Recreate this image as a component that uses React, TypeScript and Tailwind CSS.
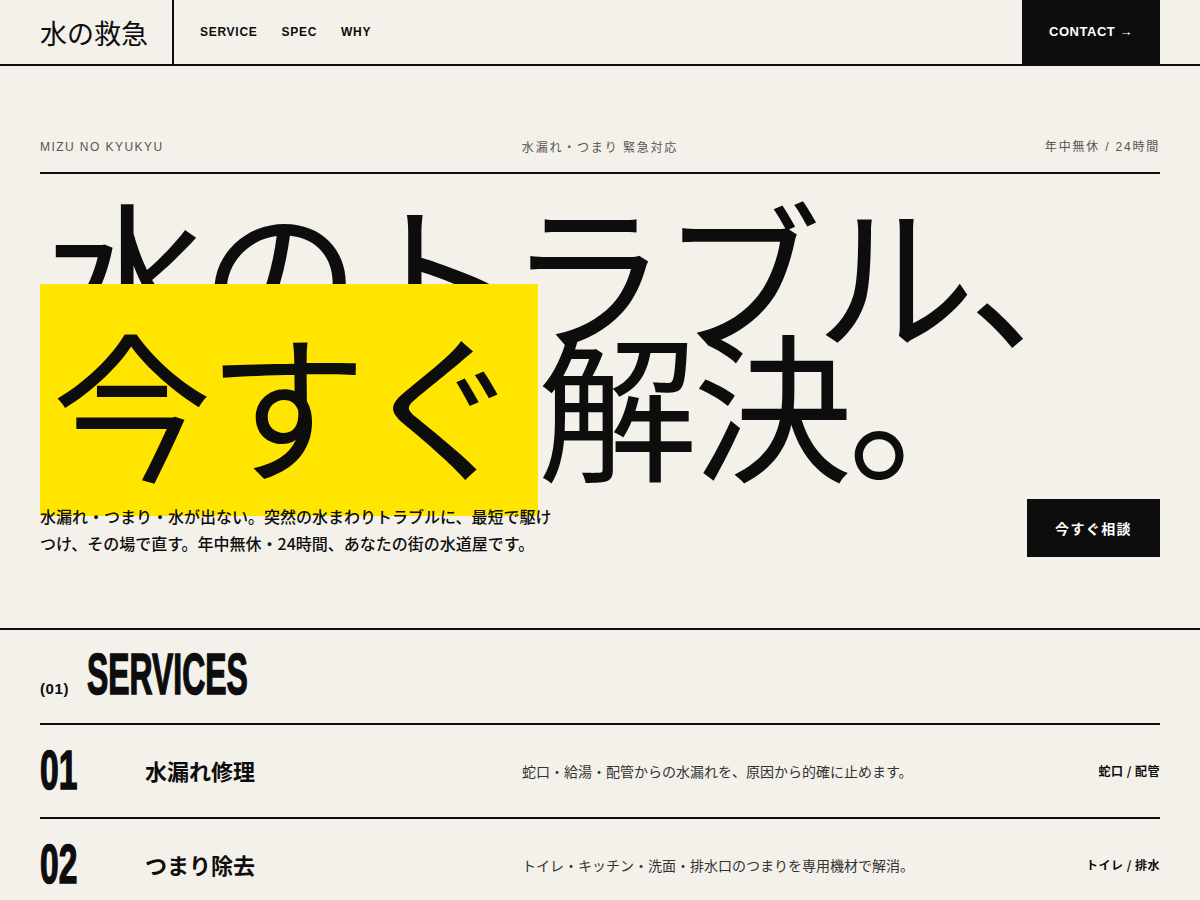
import React from "react";

const sans = { fontFamily: '"Liberation Sans", "Noto Sans CJK JP", sans-serif' };

const services = [
  { no: "01", title: "水漏れ修理", desc: "蛇口・給湯・配管からの水漏れを、原因から的確に止めます。", tag: "蛇口 / 配管" },
  { no: "02", title: "つまり除去", desc: "トイレ・キッチン・洗面・排水口のつまりを専用機材で解消。", tag: "トイレ / 排水" },
];

export default function App() {
  return (
    <div className="min-h-[900px] bg-[#f3f1ea] text-[#0d0d0d] overflow-hidden" style={sans}>
      <header className="flex h-[66px] items-stretch border-b-2 border-[#0d0d0d] px-10">
        <div className="flex w-[134px] items-center border-r-2 border-[#0d0d0d] font-['Noto_Sans_CJK_JP',sans-serif] text-[27px] leading-none">
          水の救急
        </div>
        <nav className="flex items-center gap-6 pl-[26px] text-[12px] font-bold tracking-[0.06em]">
          <span>SERVICE</span>
          <span>SPEC</span>
          <span>WHY</span>
        </nav>
        <div className="ml-auto flex w-[138px] items-center justify-center bg-[#0d0d0d] text-[13px] font-bold tracking-[0.04em] text-white">
          CONTACT →
        </div>
      </header>

      <section className="px-10">
        <div className="mt-[73px] grid grid-cols-3 border-b-2 border-[#0d0d0d] pb-[17px] text-[12px] leading-4 text-[#555]">
          <span className="font-medium tracking-[0.12em]">MIZU NO KYUKYU</span>
          <span className="text-center font-['Noto_Sans_CJK_JP',sans-serif] tracking-[0.15em]">水漏れ・つまり 緊急対応</span>
          <span className="text-right tracking-[0.15em]">年中無休 / 24時間</span>
        </div>

        <h1 className="mt-[30px] font-['Noto_Sans_CJK_JP',sans-serif] text-[160px] font-normal leading-[0.82] tracking-[-0.03em] whitespace-nowrap">
          <span className="pl-[7px] tracking-[-0.04em]">水のトラブル、</span>
          <br />
          <span className="bg-[#ffe500] pl-[12px] pr-[20px]">今すぐ</span>解決。
        </h1>

        <div className="relative mt-[33px] flex items-end justify-between">
          <p className="max-w-[520px] font-['Noto_Sans_CJK_JP',sans-serif] text-[16px] font-medium leading-[27px]">
            水漏れ・つまり・水が出ない。突然の水まわりトラブルに、最短で駆けつけ、その場で直す。年中無休・24時間、あなたの街の水道屋です。
          </p>
          <div className="flex h-[58px] w-[133px] items-center justify-center bg-[#0d0d0d] font-['Noto_Sans_CJK_JP',sans-serif] text-[14px] font-bold tracking-[0.1em] text-white">
            今すぐ相談
          </div>
        </div>
      </section>

      <section className="mt-[71px] border-t-2 border-[#0d0d0d] px-10">
        <div className="flex items-baseline gap-[18px] border-b-2 border-[#0d0d0d] pt-[15px] pb-[20px]">
          <span className="text-[15px] font-semibold tracking-[0.04em]">(01)</span>
          <span className="inline-block origin-left scale-x-[0.55] text-[58px] font-bold leading-none [-webkit-text-stroke:1.6px_#0d0d0d]">
            SERVICES
          </span>
        </div>
        {services.map((s) => (
          <div key={s.no} className="flex h-[94px] items-center border-b-2 border-[#0d0d0d]">
            <div className="w-[105px] pb-[3px]">
              <span className="inline-block origin-left scale-x-[0.6] text-[56px] font-bold leading-none [-webkit-text-stroke:1.6px_#0d0d0d]">
                {s.no}
              </span>
            </div>
            <span className="w-[377px] pb-[2px] font-['Noto_Sans_CJK_JP',sans-serif] text-[22px] font-bold">{s.title}</span>
            <span className="flex-1 font-['Noto_Sans_CJK_JP',sans-serif] text-[14px] text-[#333]">{s.desc}</span>
            <span className="font-['Noto_Sans_CJK_JP',sans-serif] text-[12px] font-bold tracking-[0.04em]">{s.tag}</span>
          </div>
        ))}
      </section>
    </div>
  );
}
